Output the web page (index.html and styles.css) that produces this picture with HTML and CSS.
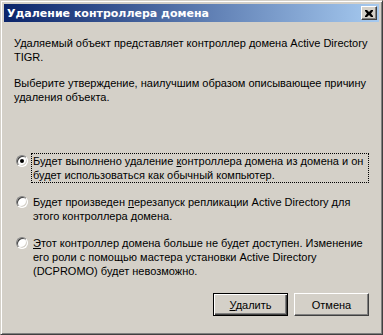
FILE: index.html
```html
<!DOCTYPE html>
<html lang="ru">
<head>
<meta charset="utf-8">
<title>Удаление контроллера домена</title>
<link rel="stylesheet" href="styles.css">
</head>
<body>
<div class="window">
  <div class="titlebar">
    <span class="title">Удаление контроллера домена</span>
    <span class="close"><svg width="8" height="7" viewBox="0 0 8 7"><path d="M0 0h2l2 2 2-2h2v1L6 3.5 8 6v1H6L4 5 2 7H0V6l2-2.5L0 1z" fill="#000"/></svg></span>
  </div>
  <div class="content">
    <p class="para">Удаляемый объект представляет контроллер домена Active Directory TIGR.</p>
    <p class="para">Выберите утверждение, наилучшим образом описывающее причину удаления объекта.</p>
    <div class="options">
      <div class="option">
        <span class="radio checked"><span class="dot"></span></span>
        <span class="label focus">Будет выполнено удаление <u>к</u>онтроллера домена из домена и он будет использоваться как обычный компьютер.</span>
      </div>
      <div class="option">
        <span class="radio"></span>
        <span class="label">Будет произведен <u>п</u>ерезапуск репликации Active Directory для этого контроллера домена.</span>
      </div>
      <div class="option">
        <span class="radio"></span>
        <span class="label"><u>Э</u>тот контроллер домена больше не будет доступен. Изменение его роли с помощью мастера установки Active Directory (DCPROMO) будет невозможно.</span>
      </div>
    </div>
    <div class="buttons">
      <button class="btn default"><u>У</u>далить</button>
      <button class="btn">Отмена</button>
    </div>
  </div>
</div>
</body>
</html>
```
FILE: styles.css
```css
html, body {
  margin: 0;
  padding: 0;
  background: #D4D0C8;
}
.window {
  width: 383px;
  height: 335px;
  box-sizing: border-box;
  border: 1px solid;
  border-color: #D4D0C8 #404040 #404040 #D4D0C8;
  box-shadow: inset 1px 1px 0 #FFFFFF, inset -1px -1px 0 #808080;
  padding: 3px;
  background: #D4D0C8;
  display: flex;
  flex-direction: column;
  font-family: "Liberation Sans", Arial, sans-serif;
  font-size: 11px;
  color: #000;
}
.titlebar {
  height: 18px;
  background: linear-gradient(to right, #0A246A, #A6CAF0);
  display: flex;
  align-items: center;
  justify-content: space-between;
  padding: 0 2px 0 3px;
}
.title {
  color: #fff;
  font-family: "DejaVu Sans", sans-serif;
  font-weight: bold;
  font-size: 11px;
}
.close {
  width: 16px;
  height: 14px;
  box-sizing: border-box;
  background: #D4D0C8;
  border: 1px solid;
  border-color: #FFFFFF #404040 #404040 #FFFFFF;
  box-shadow: inset -1px -1px 0 #808080;
  display: flex;
  align-items: center;
  justify-content: center;
}
.content {
  flex: 1;
  display: flex;
  flex-direction: column;
  padding: 14px 10px 0 10px;
}
.para {
  margin: 0 0 12px 0;
  line-height: 14px;
}
.options {
  margin-top: 38px;
  display: flex;
  flex-direction: column;
  gap: 12px;
}
.option {
  display: flex;
  align-items: flex-start;
}
.radio {
  width: 12px;
  height: 12px;
  flex: none;
  box-sizing: border-box;
  border-radius: 50%;
  background: #fff;
  border: 1px solid;
  border-color: #808080 #FFFFFF #FFFFFF #808080;
  box-shadow: inset 1px 1px 0 #404040, inset -1px -1px 0 #D4D0C8;
  margin: 1px 3px 0 2px;
  display: flex;
  align-items: center;
  justify-content: center;
}
.dot {
  width: 4px;
  height: 4px;
  border-radius: 50%;
  background: #000;
}
.label {
  line-height: 14px;
  padding: 0 1px;
  border: 1px dotted transparent;
  margin-top: -1px;
}
.label.focus {
  border-color: #000;
}
.buttons {
  margin-top: auto;
  margin-bottom: 15px;
  display: flex;
  justify-content: flex-end;
  gap: 6px;
}
.btn {
  width: 75px;
  height: 23px;
  box-sizing: border-box;
  background: #D4D0C8;
  font-family: "Liberation Sans", Arial, sans-serif;
  font-size: 11px;
  color: #000;
  border: 1px solid;
  border-color: #FFFFFF #404040 #404040 #FFFFFF;
  box-shadow: inset -1px -1px 0 #808080;
  padding: 0;
}
.btn.default {
  border: 1px solid #000;
  box-shadow: inset 1px 1px 0 #FFFFFF, inset -1px -1px 0 #404040, inset -2px -2px 0 #808080;
}
```
